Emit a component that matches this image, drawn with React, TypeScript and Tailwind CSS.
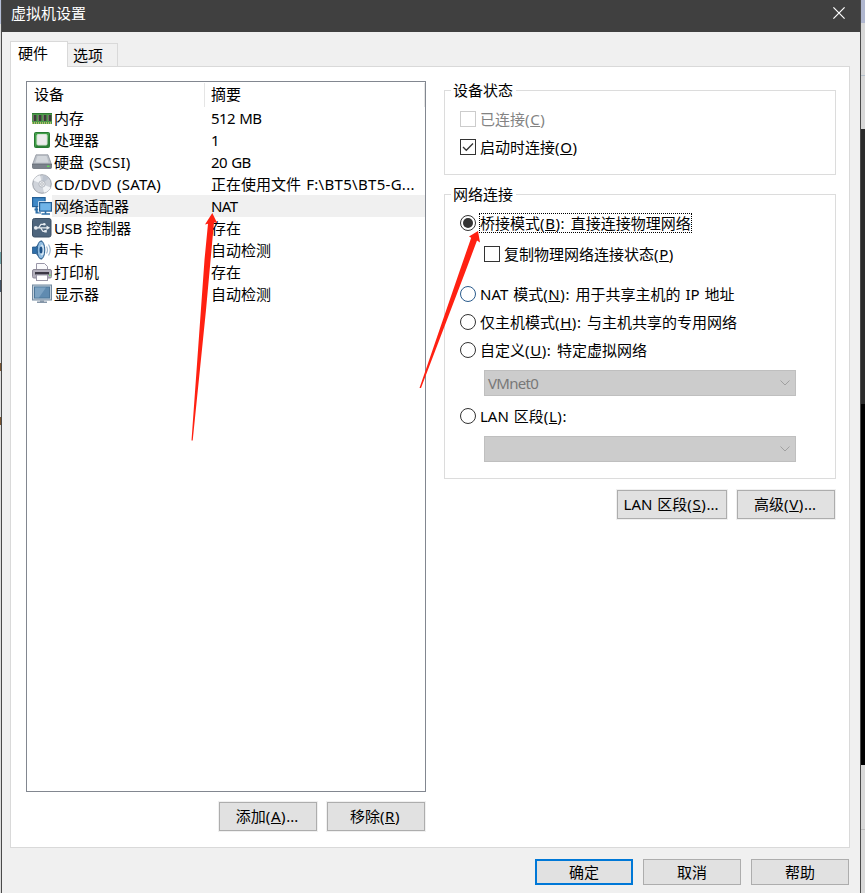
import type { ReactNode } from 'react';
import clsx from 'clsx';

interface Device {
  name: string;
  summary: string;
  icon: ReactNode;
  selected?: boolean;
}

// Splits a caption into CJK runs, latin runs and "(&X)" keyboard mnemonics
function Caption({ text, tracking = 'tracking-normal' }: { text: string; tracking?: string }) {
  const parts = text.match(/\(&\w\):?\s?|[\u4e00-\u9fff]+|[^\u4e00-\u9fff(]+|\([^\u4e00-\u9fff&]*/g) ?? [];
  return (
    <span className="whitespace-pre [word-spacing:1px]">
      {parts.map((part, i) => {
        if (part.startsWith('(&')) {
          return (
            <span key={i} className="tracking-[0.6px]">
              (<span className="underline decoration-1 underline-offset-1">{part[2]}</span>
              {part.slice(3)}
            </span>
          );
        }
        const latin = !/[\u4e00-\u9fff]/.test(part);
        return (
          <span key={i} className={latin ? tracking : undefined}>
            {part}
          </span>
        );
      })}
    </span>
  );
}

const MemoryIcon = () => (
  <svg width="20" height="20" viewBox="0 0 20 20">
    <rect x="0" y="5" width="20" height="11" fill="#4c9a4a" />
    <path d="M0 5.500h20" stroke="#2f7a33" />
    {[1, 6, 11, 16].map((x) => (
      <g key={x}>
        <rect x={x} y="7" width="3.4" height="6" fill="#3f3c3c" />
        <path d={`M${x + 0.5} 7v6`} stroke="#77706c" />
      </g>
    ))}
    <path d="M0 15h20" stroke="#d8c776" strokeWidth="1.6" strokeDasharray="1 1" />
  </svg>
);

const CpuIcon = () => (
  <svg width="20" height="20" viewBox="0 0 20 20">
    <rect x="2.500" y="2.500" width="15" height="15" rx="1" fill="#43a04a" stroke="#277a32" />
    <path d="M3 17l3-3h9l2-10v13z" fill="#2d7f38" />
    <rect x="5" y="4.500" width="10" height="10.500" rx="1" fill="#ececec" stroke="#d5e5d4" />
  </svg>
);

const DiskIcon = () => (
  <svg width="20" height="20" viewBox="0 0 20 20">
    <path d="M4 2.800h12l3.500 9.700H.5z" fill="#bcc1c8" stroke="#868d96" strokeWidth=".7" />
    <path d="M.5 12h19v3.500q0 1-1 1h-17q-1 0-1-1z" fill="#7b828c" stroke="#5d646d" strokeWidth=".7" />
    <path d="M5.500 4h9l2 6.500h-13z" fill="#d3d7dc" />
    <rect x="15" y="13.500" width="2.500" height="1.500" fill="#65d85b" />
  </svg>
);

const DiscIcon = () => (
  <svg width="20" height="20" viewBox="0 0 20 20">
    <circle cx="10" cy="10" r="9.300" fill="#cfd3da" stroke="#8d929b" strokeWidth=".8" />
    <path d="M10 10L1.500 6.500A9 9 0 0 1 8 1.200zM10 10l8.500 3.500a9 9 0 0 1-6.500 5.300z" fill="#f1f3f6" />
    <path d="M10 10l1-9a9 9 0 0 1 6 3.300z" fill="#bcc3ce" />
    <circle cx="10" cy="10" r="3.200" fill="#e9ebee" stroke="#a8adb6" strokeWidth=".8" />
    <circle cx="10" cy="10" r="1.300" fill="#fff" stroke="#9297a0" strokeWidth=".6" />
  </svg>
);

const NetworkIcon = () => (
  <svg width="20" height="20" viewBox="0 0 20 20">
    <rect x=".6" y="1.600" width="12.500" height="9" fill="#3f88c6" stroke="#245f96" strokeWidth="1.200" />
    <path d="M4.500 11v5.500H9M2.500 13.500h4" fill="none" stroke="#2e6fa8" strokeWidth="2" />
    <rect x="7.600" y="6.600" width="11.800" height="8.500" fill="#6fb4e8" stroke="#fff" strokeWidth="2.600" />
    <rect x="7.600" y="6.600" width="11.800" height="8.500" fill="#6fb4e8" stroke="#245f96" strokeWidth="1.200" />
    <path d="M13.500 15v2.500M9.500 18h8.500" stroke="#2e6fa8" strokeWidth="1.600" />
  </svg>
);

const UsbIcon = () => (
  <svg width="20" height="20" viewBox="0 0 20 20">
    <rect x=".5" y=".5" width="18.500" height="18.500" rx="2" fill="#4e657d" stroke="#3d5166" />
    <path d="M3.500 9.800h12M6.500 9.800l2.500-3.500h3M8.500 9.800l2.500 3.500h2.500" fill="none" stroke="#e6ebf0" strokeWidth="1.200" />
    <circle cx="3.800" cy="9.800" r="1.900" fill="#e6ebf0" />
    <circle cx="12.300" cy="6.300" r="1.300" fill="#e6ebf0" />
    <path d="M12.300 12h2.500v2.500h-2.500zM14.500 7.600l3.500 2.200-3.500 2.200z" fill="#e6ebf0" />
  </svg>
);

const SoundIcon = () => (
  <svg width="20" height="20" viewBox="0 0 20 20">
    <path d="M.5 7h3.500L9.500.8v18.400L4 13.500H.5z" fill="#2f6ea8" stroke="#245685" strokeWidth=".8" />
    <ellipse cx="9" cy="10" rx="3.800" ry="9" fill="#8fbbe0" stroke="#285b8b" />
    <ellipse cx="10" cy="10" rx="1.900" ry="5.500" fill="#d4e6f4" />
    <ellipse cx="9" cy="10" rx="1.500" ry="3.500" fill="#1f5288" />
    <path d="M14.500 6.500q2 3.500 0 7M16.500 4.500q3.500 5.500 0 11" fill="none" stroke="#9db6cf" strokeWidth="1.200" />
  </svg>
);

const PrinterIcon = () => (
  <svg width="20" height="20" viewBox="0 0 20 20">
    <path d="M4.500 8V1.500h8l3 3V8z" fill="#fafafc" stroke="#9a97a8" />
    <rect x=".5" y="7.500" width="19" height="8.500" rx="1.500" fill="#b3b0bc" stroke="#8b8896" />
    <rect x="3" y="10" width="14" height="2.500" fill="#3b3844" />
    <rect x="4.500" y="13" width="11" height="5.500" fill="#fff" stroke="#9a97a8" />
    <rect x="17.200" y="12.500" width="1.500" height="1.500" fill="#65d85b" />
  </svg>
);

const MonitorIcon = () => (
  <svg width="20" height="20" viewBox="0 0 20 20">
    <rect x=".5" y="1" width="19" height="15" fill="#c3d0dc" stroke="#72899f" />
    <rect x="2.500" y="3" width="15" height="11" fill="#608bb0" stroke="#4d7699" />
    <path d="M3 3.500h11L7 13.500H3z" fill="#7da3c3" />
    <path d="M8 16.500h4v1h3V19H5v-1.500h3z" fill="#8596a8" />
  </svg>
);

const devices: Device[] = [
  { name: '内存', summary: '512 MB', icon: <MemoryIcon /> },
  { name: '处理器', summary: '1', icon: <CpuIcon /> },
  { name: '硬盘 (SCSI)', summary: '20 GB', icon: <DiskIcon /> },
  { name: 'CD/DVD (SATA)', summary: '正在使用文件 F:\\BT5\\BT5-G...', icon: <DiscIcon /> },
  { name: '网络适配器', summary: 'NAT', icon: <NetworkIcon />, selected: true },
  { name: 'USB 控制器', summary: '存在', icon: <UsbIcon /> },
  { name: '声卡', summary: '自动检测', icon: <SoundIcon /> },
  { name: '打印机', summary: '存在', icon: <PrinterIcon /> },
  { name: '显示器', summary: '自动检测', icon: <MonitorIcon /> },
];

function Button({ text, className }: { text: string; className?: string }) {
  return (
    <button
      className={clsx(
        'flex shrink-0 items-center justify-center bg-[#e1e1e1]',
        className ?? 'h-[29px] w-[98px] border border-[#adadad] pr-0.5 pb-0.5 outline outline-[#f0f0f0]',
      )}
    >
      <Caption text={text} />
    </button>
  );
}

function Checkbox({ text, checked, disabled }: { text: string; checked?: boolean; disabled?: boolean }) {
  return (
    <label className={clsx('flex h-7 items-center gap-1', disabled && 'text-[#838383]')}>
      <span className={clsx('flex size-4 shrink-0 border bg-white', disabled ? 'border-[#cccccc]' : 'border-[#333333]')}>
        {checked && (
          <svg width="14" height="14" viewBox="0 0 14 14" fill="none" stroke="#333" strokeWidth="1.300">
            <path d="M2 7l3.300 3.300L12 3.500" />
          </svg>
        )}
      </span>
      <Caption text={text} />
    </label>
  );
}

function Radio({ text, checked, hot }: { text: string; checked?: boolean; hot?: boolean }) {
  return (
    <label className="flex h-7 items-center gap-[3px]">
      <span
        className={clsx(
          'flex size-4 shrink-0 items-center justify-center rounded-full border bg-white',
          hot ? 'border-[#2a5b8c]' : 'border-[#333333]',
        )}
      >
        {checked && <span className="size-2.5 rounded-full bg-[#333333]" />}
      </span>
      <span className={clsx('flex h-5 items-center border border-dotted', checked ? 'border-black' : 'border-transparent')}>
        <Caption text={text} />
      </span>
    </label>
  );
}

function Combo({ value }: { value?: string }) {
  return (
    <div className="ml-6 flex h-[26px] w-[312px] items-center justify-between border border-[#bfbfbf] bg-[#cccccc] pr-[5px] pl-[3px] text-[#787878]">
      <span className="tracking-[-0.7px]">{value}</span>
      <svg width="10" height="6" viewBox="0 0 10 6" fill="none" stroke="#a0a0a0">
        <path d="M.5.5L5 5 9.500.5" />
      </svg>
    </div>
  );
}

function Group({ title, className, children }: { title: string; className: string; children: ReactNode }) {
  return (
    <section className={clsx('w-[392px] border border-[#dcdcdc] pl-[15px]', className)}>
      <h2 className="-mt-[11px] -ml-[9px] flex h-5 w-fit items-center bg-white pr-[3px] pl-0.5">{title}</h2>
      {children}
    </section>
  );
}

function DeviceList() {
  return (
    <div className="h-[711px] w-[400px] border border-[#828790] bg-white">
      <div className="flex h-[25px] items-center">
        <span className="flex h-6 w-[178px] items-center border-r border-[#e5e5e5] pb-0.5 pl-[7px]">设备</span>
        <span className="flex h-6 flex-1 items-center border-r border-[#e5e5e5] pb-0.5 pl-1.5">摘要</span>
      </div>
      {devices.map((device) => (
        <div key={device.name} className="flex h-[22px] items-center pl-[5px]">
          <span className="w-5 shrink-0">{device.icon}</span>
          <span className={clsx('flex h-[22px] flex-1 items-center pl-[2px]', device.selected && 'bg-[#f0f0f0]')}>
            <span className="w-[157px]">
              <Caption text={device.name} tracking={device.name.startsWith('U') ? 'tracking-[-0.4px]' : 'tracking-[0.2px]'} />
            </span>
            <Caption text={device.summary} tracking={device.summary.includes('F:') ? 'tracking-[0.3px]' : 'tracking-[-0.6px]'} />
          </span>
        </div>
      ))}
    </div>
  );
}

function HardwarePage() {
  return (
    <div className="flex h-[782px] w-[840px] border border-[#d9d9d9] bg-white pt-[14px] pl-[15px]">
      <div className="w-[400px]">
        <DeviceList />
        <div className="mt-2.5 flex justify-end gap-2.5 pr-px">
          <Button text="添加(&A)..." />
          <Button text="移除(&R)" />
        </div>
      </div>

      <div className="mt-[9px] ml-[18px] w-[392px]">
        <Group title="设备状态" className="h-[85px]">
          <div className="mt-[5px]">
            <Checkbox text="已连接(&C)" disabled />
            <Checkbox text="启动时连接(&O)" checked />
          </div>
        </Group>

        <Group title="网络连接" className="mt-[19px] h-[285px]">
          <div className="mt-[5px]">
            <Radio text="桥接模式(&B): 直接连接物理网络" checked />
            <div className="mt-[3px] ml-6">
              <Checkbox text="复制物理网络连接状态(&P)" />
            </div>
          </div>
          <div className="mt-3">
            <Radio text="NAT 模式(&N): 用于共享主机的 IP 地址" hot />
            <Radio text="仅主机模式(&H): 与主机共享的专用网络" />
            <Radio text="自定义(&U): 特定虚拟网络" />
          </div>
          <div className="mt-1.5">
            <Combo value="VMnet0" />
          </div>
          <div className="mt-1.5 mb-1.5">
            <Radio text="LAN 区段(&L):" />
          </div>
          <Combo />
        </Group>

        <div className="mt-[11px] flex justify-end gap-2.5 pr-px">
          <Button text="LAN 区段(&S)..." className="h-[29px] w-[110px] border border-[#adadad] pr-0.5 pb-0.5 outline outline-[#f0f0f0]" />
          <Button text="高级(&V)..." />
        </div>
      </div>
    </div>
  );
}

// Red pen marks drawn over the dialog
function Arrows() {
  return (
    <svg className="pointer-events-none absolute inset-0" width="865" height="893" fill="#ff2112">
      <path d="M212.300 213L205 224.500l3-.8-3.500 36L191.500 440.500h1.200L206 310l8-87.500 3 .3z" />
      <path d="M478 231L469 236.500l2.200 1.300L460 270 419.500 388h1.500L466 270l11-29.500 3 2z" />
    </svg>
  );
}

export default function App() {
  return (
    <div className="relative flex h-[893px] w-[865px] overflow-hidden bg-[#d8d8d8] font-['Noto_Sans','Noto_Sans_CJK_SC',sans-serif] text-[15px] leading-5 text-black">
      <div className="flex w-px flex-col bg-[#dcdcdc]">
        <div className="h-6 bg-[#b4bdd6]" />
        <div className="mt-[228px] h-3 bg-[#6fa3a8]" />
        <div className="mt-4 h-3 bg-[#44566a]" />
        <div className="mt-[71px] h-2 bg-[#7a5530]" />
        <div className="mt-[46px] h-2 bg-[#7a5530]" />
      </div>

      <div className="flex h-full w-[860px] flex-col border-x border-[#4a4a4a] bg-[#f0f0f0]">
        <header className="flex h-8 shrink-0 items-start justify-between bg-[#404040] pr-[15px] pl-[9px] text-white">
          <h1 className="mt-[3px]">虚拟机设置</h1>
          <svg className="mt-[7px]" width="12" height="12" viewBox="0 0 12 12" stroke="#fff" strokeWidth="1.200">
            <path d="M.4.4l11.200 11.200M11.600.4L.4 11.600" />
          </svg>
        </header>

        <main className="pl-2">
          <nav className="relative -mb-px flex h-[35px] items-end">
            <span className="flex h-[26px] w-[58px] items-center justify-center border border-b-0 border-[#d9d9d9] bg-white pr-3 pb-1">硬件</span>
            <span className="-ml-px flex h-6 w-[51px] items-center border border-[#d9d9d9] pl-[5px]">选项</span>
          </nav>
          <HardwarePage />
          <footer className="mt-[11px] flex gap-2.5 pl-[525px]">
            <Button text="确定" className="h-[26px] w-[98px] border-2 border-[#0078d7]" />
            <Button text="取消" className="h-[26px] w-[98px] border border-[#adadad]" />
            <Button text="帮助" className="h-[26px] w-[98px] border border-[#adadad]" />
          </footer>
        </main>
      </div>

      {/* Strip of the desktop behind the dialog */}
      <div className="flex flex-1 flex-col">
        <div className="h-[23px] bg-[#b0b7cf]" />
        <div className="h-[53px] border-b border-[#b3bfcb]" />
        <div className="h-[53px]" />
        <div className="h-[275px] bg-[#2b2b2b]" />
        <div className="h-[361px] bg-black" />
        <div className="h-[65px] border-b border-[#bdbdbd]" />
      </div>

      <Arrows />
    </div>
  );
}
